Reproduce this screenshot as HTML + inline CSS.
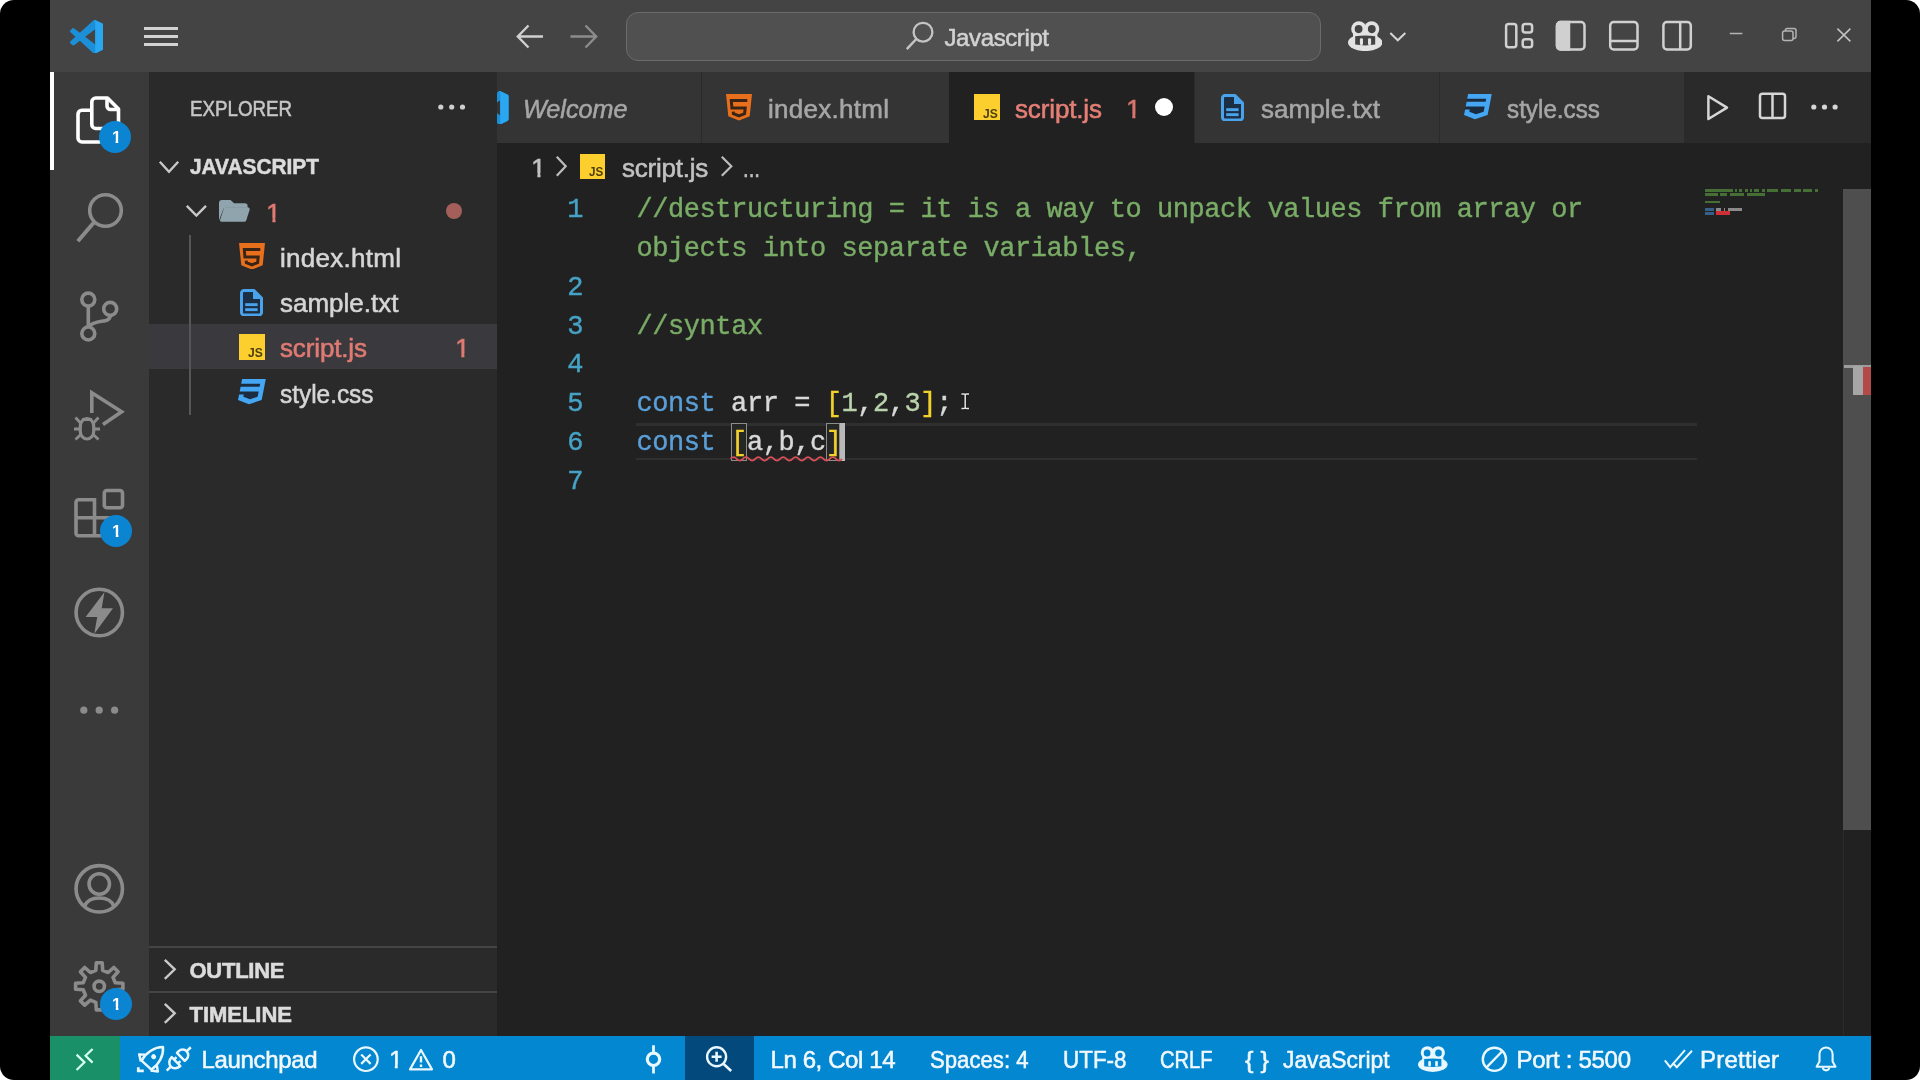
<!DOCTYPE html>
<html lang="en"><head><meta charset="utf-8"><title>script.js - Javascript - Visual Studio Code</title>
<style>
html,body{margin:0;padding:0;width:1920px;height:1080px;overflow:hidden;background:#fff;}
#frame{position:absolute;left:0;top:0;width:1920px;height:1080px;background:#000;border-radius:14px;overflow:hidden;filter:brightness(1);}
.b{position:absolute;display:block;}
.t{position:absolute;white-space:pre;line-height:1;display:block;}
.s{font-family:"Liberation Sans",sans-serif;-webkit-text-stroke:0.55px currentColor;}
.m{font-family:"Liberation Mono",monospace;-webkit-text-stroke:0.4px currentColor;}
</style></head><body><div id="frame">
<div class="b" style="left:50px;top:0px;width:1821px;height:72px;background:#444444;"></div>
<div class="b" style="left:50px;top:72px;width:99px;height:964px;background:#3a3a3a;"></div>
<div class="b" style="left:149px;top:72px;width:348px;height:964px;background:#2a2a2a;"></div>
<div class="b" style="left:497px;top:72px;width:1374px;height:71px;background:#2a2a2a;"></div>
<div class="b" style="left:497px;top:143px;width:1374px;height:893px;background:#212121;"></div>
<div class="b" style="left:50px;top:1036px;width:1821px;height:44px;background:#0287d0;"></div>
<div class="b" style="left:50px;top:1036px;width:70px;height:44px;background:#1a9068;"></div>
<div class="b" style="left:626px;top:11.5px;width:695px;height:49px;background:#505050;border:1.5px solid #6b6b6b;border-radius:12px;box-sizing:border-box;"></div>
<span class="t s" style="left:944.50px;top:25.67px;font-size:24px;color:#d2d2d2;letter-spacing:-0.392px;">Javascript</span>
<div class="b" style="left:50px;top:72px;width:3.8px;height:98px;background:#ffffff;"></div>
<span class="t s" style="left:190.00px;top:98.12px;font-size:22px;color:#c6c6c6;letter-spacing:0.000px;transform:scaleX(0.8513);transform-origin:0 0;">EXPLORER</span>
<span class="t s" style="left:189.50px;top:156.12px;font-size:22px;color:#dcdcdc;letter-spacing:0.000px;font-weight:700;transform:scaleX(0.9479);transform-origin:0 0;">JAVASCRIPT</span>
<span class="t s" style="left:266.30px;top:199.73px;font-size:26px;color:#e07a72;letter-spacing:0.000px;clip-path:polygon(0 0,100% 0,100% 70.5%,63.5% 70.5%,63.5% 100%,42.5% 100%,42.5% 70.5%,0 70.5%);">1</span>
<span class="t s" style="left:280.00px;top:245.48px;font-size:26px;color:#d6d6d6;letter-spacing:0.277px;">index.html</span>
<span class="t s" style="left:280.00px;top:290.48px;font-size:26px;color:#d6d6d6;letter-spacing:0.002px;">sample.txt</span>
<div class="b" style="left:149px;top:323.9px;width:348px;height:44.8px;background:#3a3a3e;"></div>
<span class="t s" style="left:280.00px;top:335.48px;font-size:26px;color:#e07a72;letter-spacing:-0.139px;">script.js</span>
<span class="t s" style="left:455.20px;top:335.48px;font-size:26px;color:#e07a72;letter-spacing:0.000px;clip-path:polygon(0 0,100% 0,100% 70.5%,63.5% 70.5%,63.5% 100%,42.5% 100%,42.5% 70.5%,0 70.5%);">1</span>
<span class="t s" style="left:280.00px;top:380.98px;font-size:26px;color:#d6d6d6;letter-spacing:0.000px;transform:scaleX(0.9380);transform-origin:0 0;">style.css</span>
<div class="b" style="left:189.3px;top:235px;width:2px;height:180px;background:#565656;"></div>
<div class="b" style="left:446px;top:202.5px;width:16px;height:16px;border-radius:50%;background:#a55f5a"></div>
<div class="b" style="left:149px;top:946px;width:348px;height:2px;background:#454545;"></div>
<div class="b" style="left:149px;top:991px;width:348px;height:2px;background:#454545;"></div>
<span class="t s" style="left:189.50px;top:959.87px;font-size:22px;color:#dcdcdc;letter-spacing:-0.260px;font-weight:700;">OUTLINE</span>
<span class="t s" style="left:189.50px;top:1004.37px;font-size:22px;color:#dcdcdc;letter-spacing:-0.025px;font-weight:700;">TIMELINE</span>
<div class="b" style="left:497px;top:72px;width:204px;height:71px;background:#343434;"></div>
<div class="b" style="left:702px;top:72px;width:247px;height:71px;background:#343434;"></div>
<div class="b" style="left:949px;top:72px;width:245px;height:71px;background:#212121;"></div>
<div class="b" style="left:1195px;top:72px;width:243.5px;height:71px;background:#343434;"></div>
<div class="b" style="left:1439.5px;top:72px;width:244.5px;height:71px;background:#343434;"></div>
<span class="t s" style="left:522.50px;top:96.48px;font-size:26px;color:#a6a6a6;letter-spacing:0.000px;font-style:italic;transform:scaleX(0.9687);transform-origin:0 0;">Welcome</span>
<span class="t s" style="left:768.00px;top:96.48px;font-size:26px;color:#a6a6a6;letter-spacing:0.277px;">index.html</span>
<span class="t s" style="left:1015.00px;top:96.48px;font-size:26px;color:#e57f76;letter-spacing:-0.139px;">script.js</span>
<span class="t s" style="left:1126.20px;top:96.48px;font-size:26px;color:#d9756d;letter-spacing:0.000px;clip-path:polygon(0 0,100% 0,100% 70.5%,63.5% 70.5%,63.5% 100%,42.5% 100%,42.5% 70.5%,0 70.5%);">1</span>
<div class="b" style="left:1155.25px;top:98px;width:18px;height:18px;border-radius:50%;background:#ffffff"></div>
<span class="t s" style="left:1261.00px;top:96.48px;font-size:26px;color:#a6a6a6;letter-spacing:0.058px;">sample.txt</span>
<span class="t s" style="left:1507.00px;top:96.48px;font-size:26px;color:#a6a6a6;letter-spacing:0.000px;transform:scaleX(0.9329);transform-origin:0 0;">style.css</span>
<span class="t s" style="left:531.30px;top:154.73px;font-size:26px;color:#c2c2c2;letter-spacing:0.000px;clip-path:polygon(0 0,100% 0,100% 70.5%,63.5% 70.5%,63.5% 100%,42.5% 100%,42.5% 70.5%,0 70.5%);">1</span>
<span class="t s" style="left:622.00px;top:154.73px;font-size:26px;color:#c2c2c2;letter-spacing:-0.233px;">script.js</span>
<span class="t s" style="left:743.00px;top:154.73px;font-size:26px;color:#c2c2c2;letter-spacing:0.000px;transform:scaleX(0.7849);transform-origin:0 0;">...</span>
<div class="b" style="left:636px;top:423px;width:1061px;height:2.5px;background:#2f2f2f;"></div>
<div class="b" style="left:636px;top:457.6px;width:1061px;height:2.5px;background:#2f2f2f;"></div>
<span class="t m" style="left:567.30px;top:197.02px;font-size:27px;color:#46a3c6;letter-spacing:0.000px;">1</span>
<span class="t m" style="left:567.30px;top:274.72px;font-size:27px;color:#46a3c6;letter-spacing:0.000px;">2</span>
<span class="t m" style="left:567.30px;top:313.62px;font-size:27px;color:#46a3c6;letter-spacing:0.000px;">3</span>
<span class="t m" style="left:567.30px;top:352.42px;font-size:27px;color:#46a3c6;letter-spacing:0.000px;">4</span>
<span class="t m" style="left:567.30px;top:391.32px;font-size:27px;color:#46a3c6;letter-spacing:0.000px;">5</span>
<span class="t m" style="left:567.30px;top:430.12px;font-size:27px;color:#46a3c6;letter-spacing:0.000px;">6</span>
<span class="t m" style="left:567.30px;top:469.02px;font-size:27px;color:#46a3c6;letter-spacing:0.000px;">7</span>
<span class="t m" style="left:636.50px;top:197.02px;font-size:27px;color:#79ac66;letter-spacing:0.000px;letter-spacing:-0.430px;">//destructuring = it is a way to unpack values from array or</span>
<span class="t m" style="left:636.50px;top:235.92px;font-size:27px;color:#79ac66;letter-spacing:0.000px;letter-spacing:-0.430px;">objects into separate variables,</span>
<span class="t m" style="left:636.50px;top:313.62px;font-size:27px;color:#79ac66;letter-spacing:0.000px;letter-spacing:-0.430px;">//syntax</span>
<span class="t m" style="left:636.50px;top:391.32px;font-size:27px;color:#5a9fd8;letter-spacing:0.000px;letter-spacing:-0.430px;">const</span>
<span class="t m" style="left:731.12px;top:391.32px;font-size:27px;color:#d8d8d8;letter-spacing:0.000px;letter-spacing:-0.430px;">arr =</span>
<span class="t m" style="left:825.74px;top:391.32px;font-size:27px;color:#f3d12c;letter-spacing:0.000px;letter-spacing:-0.430px;">[</span>
<span class="t m" style="left:841.51px;top:391.32px;font-size:27px;color:#b9d3ac;letter-spacing:0.000px;letter-spacing:-0.430px;">1</span>
<span class="t m" style="left:857.28px;top:391.32px;font-size:27px;color:#d8d8d8;letter-spacing:0.000px;letter-spacing:-0.430px;">,</span>
<span class="t m" style="left:873.05px;top:391.32px;font-size:27px;color:#b9d3ac;letter-spacing:0.000px;letter-spacing:-0.430px;">2</span>
<span class="t m" style="left:888.82px;top:391.32px;font-size:27px;color:#d8d8d8;letter-spacing:0.000px;letter-spacing:-0.430px;">,</span>
<span class="t m" style="left:904.59px;top:391.32px;font-size:27px;color:#b9d3ac;letter-spacing:0.000px;letter-spacing:-0.430px;">3</span>
<span class="t m" style="left:920.36px;top:391.32px;font-size:27px;color:#f3d12c;letter-spacing:0.000px;letter-spacing:-0.430px;">]</span>
<span class="t m" style="left:936.13px;top:391.32px;font-size:27px;color:#d8d8d8;letter-spacing:0.000px;letter-spacing:-0.430px;">;</span>
<div class="b" style="left:730.5px;top:423px;width:16px;height:37.5px;background:#252725;border:1.5px solid #8c8c8c;box-sizing:border-box;"></div>
<div class="b" style="left:825.5px;top:423px;width:14.5px;height:37.5px;background:#252725;border:1.5px solid #8c8c8c;box-sizing:border-box;"></div>
<span class="t m" style="left:636.50px;top:430.12px;font-size:27px;color:#5a9fd8;letter-spacing:0.000px;letter-spacing:-0.430px;">const</span>
<span class="t m" style="left:731.12px;top:430.12px;font-size:27px;color:#f3d12c;letter-spacing:0.000px;letter-spacing:-0.430px;">[</span>
<span class="t m" style="left:746.89px;top:430.12px;font-size:27px;color:#d8d8d8;letter-spacing:0.000px;letter-spacing:-0.430px;">a,b,c</span>
<span class="t m" style="left:825.74px;top:430.12px;font-size:27px;color:#f3d12c;letter-spacing:0.000px;letter-spacing:-0.430px;">]</span>
<div class="b" style="left:840px;top:423px;width:4.6px;height:38px;background:#b9b9b9;"></div>
<svg class="b" style="left:728px;top:453px;" width="116" height="10" viewBox="728 453 116 10"><path d="M730.5 458.9 q 3.1 -3.4 6.2 0 q 3.1 3.4 6.2 0 q 3.1 -3.4 6.2 0 q 3.1 3.4 6.2 0 q 3.1 -3.4 6.2 0 q 3.1 3.4 6.2 0 q 3.1 -3.4 6.2 0 q 3.1 3.4 6.2 0 q 3.1 -3.4 6.2 0 q 3.1 3.4 6.2 0 q 3.1 -3.4 6.2 0 q 3.1 3.4 6.2 0 q 3.1 -3.4 6.2 0 q 3.1 3.4 6.2 0 q 3.1 -3.4 6.2 0 q 3.1 3.4 6.2 0 q 3.1 -3.4 6.2 0 q 3.1 3.4 6.2 0" fill="none" stroke="#da4f58" stroke-width="1.7"/></svg>
<svg class="b" style="left:958px;top:390px;" width="14" height="22" viewBox="958 390 14 22"><path d="M961.4 394 H964 Q965.2 394 965.2 395.4 Q965.2 394 966.4 394 H969 M965.2 395 V407.6 M961.4 408.6 H964 Q965.2 408.6 965.2 407.2 Q965.2 408.6 966.4 408.6 H969" fill="none" stroke="#1a1a1a" stroke-width="3.4"/><path d="M961.4 394 H964 Q965.2 394 965.2 395.4 Q965.2 394 966.4 394 H969 M965.2 395 V407.6 M961.4 408.6 H964 Q965.2 408.6 965.2 407.2 Q965.2 408.6 966.4 408.6 H969" fill="none" stroke="#e4e4e4" stroke-width="1.5"/></svg>
<div class="b" style="left:1705.0px;top:189.2px;width:27.85px;height:2.6px;background:#456f35;"></div>
<div class="b" style="left:1735.24px;top:189.2px;width:1.39px;height:2.6px;background:#456f35;"></div>
<div class="b" style="left:1739.02px;top:189.2px;width:3.28px;height:2.6px;background:#456f35;"></div>
<div class="b" style="left:1744.69px;top:189.2px;width:3.28px;height:2.6px;background:#456f35;"></div>
<div class="b" style="left:1750.36px;top:189.2px;width:1.39px;height:2.6px;background:#456f35;"></div>
<div class="b" style="left:1754.14px;top:189.2px;width:5.17px;height:2.6px;background:#456f35;"></div>
<div class="b" style="left:1761.7px;top:189.2px;width:3.28px;height:2.6px;background:#456f35;"></div>
<div class="b" style="left:1767.37px;top:189.2px;width:10.84px;height:2.6px;background:#456f35;"></div>
<div class="b" style="left:1780.6px;top:189.2px;width:10.84px;height:2.6px;background:#456f35;"></div>
<div class="b" style="left:1793.83px;top:189.2px;width:7.06px;height:2.6px;background:#456f35;"></div>
<div class="b" style="left:1803.28px;top:189.2px;width:8.95px;height:2.6px;background:#456f35;"></div>
<div class="b" style="left:1814.62px;top:189.2px;width:3.28px;height:2.6px;background:#456f35;"></div>
<div class="b" style="left:1705.0px;top:193.2px;width:12.73px;height:2.6px;background:#456f35;"></div>
<div class="b" style="left:1720.12px;top:193.2px;width:7.06px;height:2.6px;background:#456f35;"></div>
<div class="b" style="left:1729.57px;top:193.2px;width:14.62px;height:2.6px;background:#456f35;"></div>
<div class="b" style="left:1746.58px;top:193.2px;width:18.4px;height:2.6px;background:#456f35;"></div>
<div class="b" style="left:1705.0px;top:200.6px;width:14.62px;height:2.6px;background:#456f35;"></div>
<div class="b" style="left:1705.0px;top:208.2px;width:8.95px;height:2.6px;background:#36608a;"></div>
<div class="b" style="left:1716.34px;top:208.2px;width:5.17px;height:2.6px;background:#8a8a8a;"></div>
<div class="b" style="left:1723.9px;top:208.2px;width:1.39px;height:2.6px;background:#8a8a8a;"></div>
<div class="b" style="left:1727.68px;top:208.2px;width:14.62px;height:2.6px;background:#8a8a8a;"></div>
<div class="b" style="left:1705.0px;top:212px;width:8.95px;height:2.6px;background:#36608a;"></div>
<div class="b" style="left:1716px;top:211.3px;width:14px;height:3.4px;background:#cf3038;"></div>
<div class="b" style="left:1842.5px;top:188.5px;width:28.5px;height:641px;background:#4e4e4e;"></div>
<div class="b" style="left:1843px;top:829.5px;width:1px;height:206px;background:#2b2b2b;"></div>
<div class="b" style="left:1843.5px;top:364.5px;width:27.5px;height:3px;background:#9c9c9c;"></div>
<div class="b" style="left:1852.5px;top:366px;width:10px;height:28.5px;background:#a6a6a6;"></div>
<div class="b" style="left:1862.5px;top:367px;width:8.5px;height:27.5px;background:#b24a4a;"></div>
<div class="b" style="left:685px;top:1036px;width:68.5px;height:44px;background:#04497b;"></div>
<span class="t s" style="left:201.50px;top:1047.67px;font-size:24px;color:#f2f8fc;letter-spacing:-0.347px;">Launchpad</span>
<span class="t s" style="left:389.20px;top:1047.67px;font-size:24px;color:#f2f8fc;letter-spacing:0.000px;clip-path:polygon(0 0,100% 0,100% 70.5%,63.5% 70.5%,63.5% 100%,42.5% 100%,42.5% 70.5%,0 70.5%);">1</span>
<span class="t s" style="left:442.50px;top:1047.67px;font-size:24px;color:#f2f8fc;letter-spacing:0.000px;">0</span>
<span class="t s" style="left:770.50px;top:1047.67px;font-size:24px;color:#f2f8fc;letter-spacing:-0.403px;">Ln 6, Col 14</span>
<span class="t s" style="left:930.00px;top:1047.67px;font-size:24px;color:#f2f8fc;letter-spacing:0.000px;transform:scaleX(0.9229);transform-origin:0 0;">Spaces: 4</span>
<span class="t s" style="left:1063.00px;top:1047.67px;font-size:24px;color:#f2f8fc;letter-spacing:0.000px;transform:scaleX(0.9339);transform-origin:0 0;">UTF-8</span>
<span class="t s" style="left:1160.00px;top:1047.67px;font-size:24px;color:#f2f8fc;letter-spacing:0.000px;transform:scaleX(0.8378);transform-origin:0 0;">CRLF</span>
<span class="t s" style="left:1244.50px;top:1047.67px;font-size:24px;color:#f2f8fc;letter-spacing:0.000px;transform:scaleX(1.0571);transform-origin:0 0;">{ }</span>
<span class="t s" style="left:1283.00px;top:1047.67px;font-size:24px;color:#f2f8fc;letter-spacing:0.000px;transform:scaleX(0.9506);transform-origin:0 0;">JavaScript</span>
<span class="t s" style="left:1516.50px;top:1047.67px;font-size:24px;color:#f2f8fc;letter-spacing:-0.291px;">Port : 5500</span>
<span class="t s" style="left:1700.00px;top:1047.67px;font-size:24px;color:#f2f8fc;letter-spacing:0.235px;">Prettier</span>
<svg class="b" style="left:69.7px;top:19.7px;" width="33.6" height="33.6" viewBox="0 0 100 100"><path fill-rule="evenodd" d="M70.9119 99.3171C72.4869 99.9307 74.2828 99.8914 75.8725 99.1264L96.4608 89.2197C98.6242 88.1787 100 85.9892 100 83.5872V16.4133C100 14.0113 98.6243 11.8218 96.4609 10.7808L75.8725 0.873756C73.7862 -0.130129 71.3446 0.11576 69.5135 1.44695C69.252 1.63711 69.0028 1.84943 68.769 2.08341L29.3551 38.0415L12.1872 25.0096C10.589 23.7965 8.35363 23.8959 6.86933 25.2461L1.36303 30.2549C-0.452552 31.9064 -0.454633 34.7627 1.35853 36.417L16.2471 50.0001L1.35853 63.5832C-0.454633 65.2374 -0.452552 68.0938 1.36303 69.7453L6.86933 74.7541C8.35363 76.1043 10.589 76.2037 12.1872 74.9905L29.3551 61.9587L68.769 97.9167C69.3925 98.5406 70.1246 99.0104 70.9119 99.3171ZM75.0152 27.2989L45.1091 50.0001L75.0152 72.7012V27.2989Z" fill="#1c8fd9"/><path d="M75.8578 99.1263C73.4721 100.274 70.6219 99.7885 68.75 97.9166C71.0564 100.223 75 98.5895 75 95.3278V4.67213C75 1.41039 71.0564 -0.223106 68.75 2.08329C70.6219 0.211402 73.4721 -0.273666 75.8578 0.873633L96.4587 10.7807C98.6234 11.8217 100 14.0112 100 16.4132V83.5871C100 85.9891 98.6234 88.1786 96.4586 89.2196L75.8578 99.1263Z" fill="#2aa7f0"/></svg>
<div class="b" style="left:144px;top:27.05px;width:34px;height:2.6px;background:#d2d2d2;"></div>
<div class="b" style="left:144px;top:35.15px;width:34px;height:2.6px;background:#d2d2d2;"></div>
<div class="b" style="left:144px;top:43.35px;width:34px;height:2.6px;background:#d2d2d2;"></div>
<svg class="b" style="left:0;top:0" width="1920" height="80" viewBox="0 0 1920 80"><path d="M543 36.5H518M528.5 25.5L517.8 36.5L528.5 47.5" fill="none" stroke="#d0d0d0" stroke-width="2.4" stroke-linejoin="miter"/></svg>
<svg class="b" style="left:0;top:0" width="1920" height="80" viewBox="0 0 1920 80"><path d="M570.5 36.5H596M585.5 25.5L596.2 36.5L585.5 47.5" fill="none" stroke="#8c8c8c" stroke-width="2.4" stroke-linejoin="miter"/></svg>
<svg class="b" style="left:900px;top:16px" width="40" height="40" viewBox="900 16 40 40"><circle cx="923" cy="32.2" r="9.4" fill="none" stroke="#c4c4c4" stroke-width="2.3"/><path d="M916.3 39 L906.8 49.2" stroke="#c4c4c4" stroke-width="2.5" fill="none"/></svg>
<svg class="b" style="left:1347.8px;top:20.5px;" width="34.4" height="30.2" viewBox="0 0 34.4 30.2"><ellipse cx="17.2" cy="21.5" rx="17.2" ry="8.6" fill="#e2e2e2"/><circle cx="10.9" cy="7.9" r="7.7" fill="#e2e2e2"/><circle cx="23.6" cy="7.9" r="7.7" fill="#e2e2e2"/><rect x="5" y="9" width="24.4" height="12" fill="#e2e2e2"/><ellipse cx="10.6" cy="8.1" rx="3.9" ry="4.1" fill="#444444"/><ellipse cx="23.8" cy="8.1" rx="3.9" ry="4.1" fill="#444444"/><path d="M7.2 15.2 Q17.2 13.6 27.2 15.2 V23.6 Q17.2 25.2 7.2 23.6Z" fill="#444444"/><rect x="11.9" y="17.3" width="3.1" height="6.6" rx="1.2" fill="#e2e2e2"/><rect x="20" y="17.3" width="3.1" height="6.6" rx="1.2" fill="#e2e2e2"/></svg>
<svg class="b" style="left:1386px;top:28px" width="24" height="18" viewBox="1386 28 24 18"><path d="M1390.3 33 L1397.8 40.2 L1405.3 33" fill="none" stroke="#d4d4d4" stroke-width="2.1"/></svg>
<svg class="b" style="left:1500px;top:16px" width="200" height="40" viewBox="1500 16 200 40" fill="none" stroke="#d0d0d0" stroke-width="2.5"><rect x="1506.1" y="24" width="10.2" height="23.3" rx="2.5"/><rect x="1522.7" y="24" width="9.4" height="8.4" rx="2.5"/><rect x="1522.7" y="39.2" width="9.4" height="8.1" rx="2.5"/><rect x="1557" y="22" width="27.5" height="27.4" rx="3.5"/><path d="M1557 25.5 a3.5 3.5 0 0 1 3.5 -3.5 H1569 V49.4 H1560.5 a3.5 3.5 0 0 1 -3.5 -3.5Z" fill="#d0d0d0"/><rect x="1610.2" y="22" width="27.3" height="27.4" rx="3.5"/><path d="M1610.2 41.1 H1637.5"/><rect x="1663.4" y="22" width="27.4" height="27.4" rx="3.5"/><path d="M1680.2 22 V49.4"/></svg>
<svg class="b" style="left:1720px;top:20px" width="140" height="30" viewBox="1720 20 140 30" fill="none" stroke="#b4b4b4" stroke-width="1.5"><path d="M1729.8 33.6 H1742.4"/><rect x="1782.6" y="31" width="10.4" height="9.4" rx="2"/><path d="M1785.4 31 V30.3 a1.8 1.8 0 0 1 1.8 -1.8 H1794 a2 2 0 0 1 2 2 V36.6 a1.8 1.8 0 0 1 -1.8 1.8 H1793"/><path d="M1837.4 28.6 L1850.4 41.4 M1850.4 28.6 L1837.4 41.4" stroke="#c4c4c4"/></svg>
<svg class="b" style="left:50px;top:72px" width="100" height="100" viewBox="50 72 100 100" fill="none" stroke="#8b8b8b" stroke-width="3.6"><g stroke="#ffffff" stroke-linejoin="round"><path d="M91.8 110 V102 a4 4 0 0 1 4 -4 H107.5 L118.5 109 V124.5 a4 4 0 0 1 -4 4 H95.8 a4 4 0 0 1 -4 -4 Z" /><path d="M107 98.5 V106 a3.5 3.5 0 0 0 3.5 3.5 H118"/><path d="M91.8 110.2 H82 a4 4 0 0 0 -4 4 V138 a4 4 0 0 0 4 4 H99 a4 4 0 0 0 4 -4 V128.5"/></g></svg>
<div class="b" style="left:99.3px;top:120.80000000000001px;width:32px;height:32px;border-radius:50%;background:#0b84d2"></div>
<span class="t s" style="left:111.90px;top:129.22px;font-size:16.5px;color:#ffffff;letter-spacing:0.000px;font-weight:700;clip-path:polygon(0 0,100% 0,100% 68.5%,69% 68.5%,69% 100%,40% 100%,40% 68.5%,0 68.5%);-webkit-text-stroke:0;">1</span>
<svg class="b" style="left:50px;top:170px" width="100" height="100" viewBox="50 170 100 100" fill="none" stroke="#8b8b8b" stroke-width="3.6"><circle cx="105.5" cy="210.5" r="15.8"/><path d="M94.3 222 L77.8 241.2" stroke-width="4"/></svg>
<svg class="b" style="left:50px;top:269px" width="100" height="98" viewBox="50 269 100 98" fill="none" stroke="#8b8b8b" stroke-width="3.6"><circle cx="88.3" cy="299.6" r="6.5"/><circle cx="110.2" cy="308.9" r="6.5"/><circle cx="88.3" cy="333.5" r="6.5"/><path d="M88.3 306.2 V327"/><path d="M110.2 315.5 C110.2 324 96 318.5 89 326.5"/></svg>
<svg class="b" style="left:50px;top:367px" width="100" height="98" viewBox="50 367 100 98" fill="none" stroke="#8b8b8b" stroke-width="3.6"><path d="M91.8 413 V392.8 L121.6 411.8 L103 424.4" stroke-linejoin="miter"/><path d="M80.3 426 a6.7 7.5 0 0 1 13.4 0 V431.5 a6.7 7.5 0 0 1 -13.4 0 Z" stroke-width="3.2"/><path d="M80 429 H74 M94 429 H100 M80.5 423 L75.5 417.5 M93.5 423 L98.5 417.5 M80.8 434.5 L75.5 439.5 M93.2 434.5 L98.5 439.5 M82 419.5 H92" stroke-width="2.8"/></svg>
<svg class="b" style="left:50px;top:465px" width="100" height="99" viewBox="50 465 100 99" fill="none" stroke="#8b8b8b" stroke-width="3.6"><rect x="104.3" y="490.5" width="18.2" height="17.2" rx="2.5"/><path d="M78.5 499.8 H94.5 V535.7 H78.5 a2.5 2.5 0 0 1 -2.5 -2.5 V502.3 a2.5 2.5 0 0 1 2.5 -2.5 Z M76 517.8 H94.5 M94.5 517.8 H113 a2.5 2.5 0 0 1 2.5 2.5 V533.2 a2.5 2.5 0 0 1 -2.5 2.5 H94.5"/></svg>
<div class="b" style="left:99.5px;top:514.8px;width:32px;height:32px;border-radius:50%;background:#0b84d2"></div>
<span class="t s" style="left:112.10px;top:523.22px;font-size:16.5px;color:#ffffff;letter-spacing:0.000px;font-weight:700;clip-path:polygon(0 0,100% 0,100% 68.5%,69% 68.5%,69% 100%,40% 100%,40% 68.5%,0 68.5%);-webkit-text-stroke:0;">1</span>
<svg class="b" style="left:50px;top:564px" width="100" height="98" viewBox="50 564 100 98" fill="none" stroke="#8b8b8b" stroke-width="3.6"><circle cx="99.25" cy="612.5" r="23.2"/><path d="M104.5 592.1 L85.6 616.9 L97.2 616.9 L94.2 634.1 L113.0 608.2 L101.7 608.2 Z" fill="#8b8b8b" stroke="none"/></svg>
<svg class="b" style="left:50px;top:680px" width="100" height="60" viewBox="50 680 100 60" fill="none" stroke="#8b8b8b" stroke-width="3.6"><g fill="#8b8b8b" stroke="none"><circle cx="83.8" cy="710.2" r="3.6"/><circle cx="99.2" cy="710.2" r="3.6"/><circle cx="114.6" cy="710.2" r="3.6"/></g></svg>
<svg class="b" style="left:50px;top:838px" width="100" height="100" viewBox="50 838 100 100" fill="none" stroke="#8b8b8b" stroke-width="3.6"><circle cx="99.25" cy="888.8" r="23.2"/><circle cx="99.25" cy="884" r="10.2"/><path d="M84.4 906.6 C86.6 900.6 92 898 99.25 898 C106.5 898 111.9 900.6 114.1 906.6"/></svg>
<svg class="b" style="left:50px;top:938px" width="100" height="98" viewBox="50 938 100 98" fill="none" stroke="#8b8b8b" stroke-width="3.6"><path d="M95.8 970.3 L96.3 962.7 L102.2 962.7 L102.7 970.3 L108.1 972.5 L113.8 967.5 L118.1 971.7 L113.0 977.4 L115.3 982.8 L122.9 983.3 L122.9 989.3 L115.3 989.8 L113.0 995.2 L118.1 1000.9 L113.8 1005.1 L108.1 1000.1 L102.7 1002.3 L102.2 1009.9 L96.3 1009.9 L95.8 1002.3 L90.4 1000.1 L84.7 1005.1 L80.4 1000.9 L85.5 995.2 L83.2 989.8 L75.6 989.3 L75.6 983.3 L83.2 982.8 L85.5 977.4 L80.4 971.7 L84.7 967.5 L90.4 972.5Z" stroke-linejoin="round"/><circle cx="99.25" cy="986.3" r="5.2"/></svg>
<div class="b" style="left:99.5px;top:987.8px;width:32px;height:32px;border-radius:50%;background:#0b84d2"></div>
<span class="t s" style="left:112.10px;top:996.22px;font-size:16.5px;color:#ffffff;letter-spacing:0.000px;font-weight:700;clip-path:polygon(0 0,100% 0,100% 68.5%,69% 68.5%,69% 100%,40% 100%,40% 68.5%,0 68.5%);-webkit-text-stroke:0;">1</span>
<svg class="b" style="left:156.3px;top:157.8px;" width="26.0" height="17.599999999999994" viewBox="156.3 157.8 26.0 17.599999999999994"><path d="M160.10000000000002 161.60000000000002 L169.3 171.6 L178.5 161.60000000000002" fill="none" stroke="#c8c8c8" stroke-width="2.4"/></svg>
<svg class="b" style="left:182.5px;top:202.3px;" width="26.80000000000001" height="17.299999999999983" viewBox="182.5 202.3 26.80000000000001 17.299999999999983"><path d="M186.3 206.10000000000002 L195.9 215.79999999999998 L205.5 206.10000000000002" fill="none" stroke="#c8c8c8" stroke-width="2.4"/></svg>
<svg class="b" style="left:219.4px;top:200.1px;" width="30.7" height="21.7" viewBox="0 0 30.7 21.7"><path d="M0 3 a3 3 0 0 1 3 -3 h8.5 l3.6 3.2 h10.9 a2.6 2.6 0 0 1 2.6 2.6 v2 h-22 a2.6 2.6 0 0 0 -2.4 1.8 l-4.2 11 z" fill="#90a4ae"/><path d="M6.3 7.3 h22.4 a2 2 0 0 1 1.9 2.6 l-3.3 10.3 a2.2 2.2 0 0 1 -2.1 1.5 h-22.5 a1.6 1.6 0 0 1 -1.5 -2.1 l3.5 -10.9 a2 2 0 0 1 1.6 -1.4 z" fill="#90a4ae"/></svg>
<svg class="b" style="left:238.8px;top:242.5px;" width="26" height="26.6" viewBox="0 0 26 26.6"><path d="M0 0 H26 L23.7 22.2 L13 26.6 L2.3 22.2 Z" fill="#e8701d"/><path d="M21.3 6.6 H5.3 L5.9 14 H19.2 L18.6 19.6 L13 21.8 L7.4 19.6 L7.2 17.6" fill="none" stroke="#3a2416" stroke-width="3"/></svg>
<svg class="b" style="left:240.1px;top:288.5px;" width="23" height="27.5" viewBox="0 0 23 27.5"><path d="M4 1.5 H14 L21.5 9 V23.5 a2.5 2.5 0 0 1 -2.5 2.5 H4 a2.5 2.5 0 0 1 -2.5 -2.5 V4 a2.5 2.5 0 0 1 2.5 -2.5 Z" fill="#1c2e44" stroke="#4aa3ea" stroke-width="3" stroke-linejoin="round"/><path d="M13 1.5 V10 H21.5 Z" fill="#4aa3ea"/><rect x="5.2" y="14.2" width="12.4" height="2.9" fill="#4aa3ea"/><rect x="5.2" y="19.2" width="12.4" height="2.9" fill="#4aa3ea"/></svg>
<div class="b" style="left:238.7px;top:333.7px;width:26px;height:26px;background:#fccf2e;"></div>
<span class="t s" style="left:247.54px;top:346.46px;font-size:13.0px;color:#4e400e;letter-spacing:0.000px;font-weight:700;transform:scaleX(0.9321);transform-origin:0 0;-webkit-text-stroke:0;">JS</span>
<svg class="b" style="left:237.8px;top:379.3px;overflow:visible;" width="27.8" height="25.4" viewBox="2.06 3 19.88 18"><path d="M5 3 H21.94 L18.96 18 L9.91 21 L2.06 18 Z" fill="#1b2c40"/><path d="M5,3L4.35,6.34H17.94L17.5,8.5H3.92L3.26,11.83H16.85L16.09,15.64L10.61,17.45L5.86,15.64L6.19,14H2.85L2.06,18L9.91,21L18.96,18L20.16,11.97L20.4,10.76L21.94,3H5Z" fill="#45a6f3"/></svg>
<svg class="b" style="left:161.3px;top:955.8px;" width="17.5" height="26.700000000000045" viewBox="161.3 955.8 17.5 26.700000000000045"><path d="M165.10000000000002 959.5999999999999 L175.0 969.15 L165.10000000000002 978.7" fill="none" stroke="#c8c8c8" stroke-width="2.4"/></svg>
<svg class="b" style="left:161.3px;top:1000.3px;" width="17.5" height="26.700000000000045" viewBox="161.3 1000.3 17.5 26.700000000000045"><path d="M165.10000000000002 1004.0999999999999 L175.0 1013.65 L165.10000000000002 1023.2" fill="none" stroke="#c8c8c8" stroke-width="2.4"/></svg>
<svg class="b" style="left:430px;top:100px" width="40" height="14" viewBox="430 100 40 14" fill="#cfcfcf"><circle cx="440.8" cy="107" r="2.6"/><circle cx="451.7" cy="107" r="2.6"/><circle cx="462.5" cy="107" r="2.6"/></svg>
<div class="b" style="left:497px;top:72px;width:60px;height:71px;overflow:hidden"><svg class="b" style="left:-21.8px;top:18.9px" width="33.6" height="33.6" viewBox="0 0 100 100"><path fill-rule="evenodd" d="M70.9119 99.3171C72.4869 99.9307 74.2828 99.8914 75.8725 99.1264L96.4608 89.2197C98.6242 88.1787 100 85.9892 100 83.5872V16.4133C100 14.0113 98.6243 11.8218 96.4609 10.7808L75.8725 0.873756C73.7862 -0.130129 71.3446 0.11576 69.5135 1.44695C69.252 1.63711 69.0028 1.84943 68.769 2.08341L29.3551 38.0415L12.1872 25.0096C10.589 23.7965 8.35363 23.8959 6.86933 25.2461L1.36303 30.2549C-0.452552 31.9064 -0.454633 34.7627 1.35853 36.417L16.2471 50.0001L1.35853 63.5832C-0.454633 65.2374 -0.452552 68.0938 1.36303 69.7453L6.86933 74.7541C8.35363 76.1043 10.589 76.2037 12.1872 74.9905L29.3551 61.9587L68.769 97.9167C69.3925 98.5406 70.1246 99.0104 70.9119 99.3171ZM75.0152 27.2989L45.1091 50.0001L75.0152 72.7012V27.2989Z" fill="#1c8fd9"/><path d="M75.8578 99.1263C73.4721 100.274 70.6219 99.7885 68.75 97.9166C71.0564 100.223 75 98.5895 75 95.3278V4.67213C75 1.41039 71.0564 -0.223106 68.75 2.08329C70.6219 0.211402 73.4721 -0.273666 75.8578 0.873633L96.4587 10.7807C98.6234 11.8217 100 14.0112 100 16.4132V83.5871C100 85.9891 98.6234 88.1786 96.4586 89.2196L75.8578 99.1263Z" fill="#2aa7f0"/></svg></div>
<svg class="b" style="left:726.3px;top:94px;" width="26" height="26.6" viewBox="0 0 26 26.6"><path d="M0 0 H26 L23.7 22.2 L13 26.6 L2.3 22.2 Z" fill="#e8701d"/><path d="M21.3 6.6 H5.3 L5.9 14 H19.2 L18.6 19.6 L13 21.8 L7.4 19.6 L7.2 17.6" fill="none" stroke="#3a2416" stroke-width="3"/></svg>
<div class="b" style="left:973.9px;top:94.4px;width:26px;height:26px;background:#fccf2e;"></div>
<span class="t s" style="left:982.74px;top:107.16px;font-size:13.0px;color:#4e400e;letter-spacing:0.000px;font-weight:700;transform:scaleX(0.9321);transform-origin:0 0;-webkit-text-stroke:0;">JS</span>
<svg class="b" style="left:1220.6px;top:93.6px;" width="23" height="27.5" viewBox="0 0 23 27.5"><path d="M4 1.5 H14 L21.5 9 V23.5 a2.5 2.5 0 0 1 -2.5 2.5 H4 a2.5 2.5 0 0 1 -2.5 -2.5 V4 a2.5 2.5 0 0 1 2.5 -2.5 Z" fill="#1c2e44" stroke="#4aa3ea" stroke-width="3" stroke-linejoin="round"/><path d="M13 1.5 V10 H21.5 Z" fill="#4aa3ea"/><rect x="5.2" y="14.2" width="12.4" height="2.9" fill="#4aa3ea"/><rect x="5.2" y="19.2" width="12.4" height="2.9" fill="#4aa3ea"/></svg>
<svg class="b" style="left:1463.8px;top:94.4px;overflow:visible;" width="27.8" height="25.4" viewBox="2.06 3 19.88 18"><path d="M5 3 H21.94 L18.96 18 L9.91 21 L2.06 18 Z" fill="#1b2c40"/><path d="M5,3L4.35,6.34H17.94L17.5,8.5H3.92L3.26,11.83H16.85L16.09,15.64L10.61,17.45L5.86,15.64L6.19,14H2.85L2.06,18L9.91,21L18.96,18L20.16,11.97L20.4,10.76L21.94,3H5Z" fill="#45a6f3"/></svg>
<svg class="b" style="left:1700px;top:85px" width="150" height="44" viewBox="1700 85 150 44" fill="none" stroke="#d6d6d6" stroke-width="2.5"><path d="M1708.4 96.2 L1727 107.6 L1708.4 119 Z" stroke-linejoin="round"/><rect x="1760" y="93.7" width="25" height="24.4" rx="2.5"/><path d="M1772.5 93.7 V118"/><g fill="#d6d6d6" stroke="none"><circle cx="1813.8" cy="107" r="2.6"/><circle cx="1824.5" cy="107" r="2.6"/><circle cx="1835.1" cy="107" r="2.6"/></g></svg>
<svg class="b" style="left:552.7px;top:153px;" width="16.5" height="26.5" viewBox="552.7 153 16.5 26.5"><path d="M556.5 156.8 L565.4000000000001 166.25 L556.5 175.7" fill="none" stroke="#bdbdbd" stroke-width="2.2"/></svg>
<div class="b" style="left:580.2px;top:153.9px;width:25px;height:25px;background:#fccf2e;"></div>
<span class="t s" style="left:588.70px;top:166.19px;font-size:12.5px;color:#4e400e;letter-spacing:0.000px;font-weight:700;transform:scaleX(0.9321);transform-origin:0 0;-webkit-text-stroke:0;">JS</span>
<svg class="b" style="left:717.7px;top:153px;" width="17.09999999999991" height="26.5" viewBox="717.7 153 17.09999999999991 26.5"><path d="M721.5 156.8 L731.0 166.25 L721.5 175.7" fill="none" stroke="#bdbdbd" stroke-width="2.2"/></svg>
<svg class="b" style="left:50px;top:1036px" width="1821" height="44" viewBox="50 1036 1821 44" fill="none" stroke="#d4fff0" stroke-width="2.3"><path d="M76.6 1054.6 L84.4 1062.3 L76.6 1070"/><path d="M92.6 1049 L85.6 1055.8 L92.6 1062.6"/></svg>
<svg class="b" style="left:50px;top:1036px" width="1821" height="44" viewBox="50 1036 1821 44" fill="none" stroke="#e9f7ff" stroke-width="2.5"><g transform="translate(146.5 1065.1) rotate(-47.5)" stroke-linejoin="round"><path d="M0 -6.7 C9 -8.8 18.8 -6.2 24.4 0 C18.8 6.2 9 8.8 0 6.7 Z"/><path d="M6.8 -7.8 L3 -12.6 L-1.2 -6.6 M6.8 7.8 L3 12.6 L-1.2 6.6"/><circle cx="11" cy="-0.4" r="2.5" fill="#e9f7ff" stroke="none"/></g><path d="M138.3 1067.2 V1070.9 H143.8" stroke-width="2.8"/></svg>
<svg class="b" style="left:50px;top:1036px" width="1821" height="44" viewBox="50 1036 1821 44" fill="none" stroke="#e9f7ff" stroke-width="2.5"><g transform="translate(178.75 1058.9) rotate(-44)" stroke-linejoin="round"><path d="M-16.8 0 H-11 M11 0 H16.8"/><path d="M-3.8 -6.2 V6.2 A7.2 6.2 0 0 1 -3.8 -6.2 Z"/><path d="M-3.8 -2.8 H-0.4 M-3.8 2.8 H-0.4"/><path d="M2.9 -5.6 V5.6 H5.4 A5.6 5.6 0 0 0 5.4 -5.6 Z"/></g></svg>
<svg class="b" style="left:50px;top:1036px" width="1821" height="44" viewBox="50 1036 1821 44" fill="none" stroke="#e9f7ff" stroke-width="2.2"><circle cx="365.9" cy="1059.2" r="11.8"/><path d="M361.2 1054.5 L370.6 1063.9 M370.6 1054.5 L361.2 1063.9"/><path d="M421 1050 L432 1069.4 H410 Z" stroke-linejoin="round"/><path d="M421 1056.2 V1062.6 M421 1064.6 V1067" stroke-width="2.4"/></svg>
<svg class="b" style="left:50px;top:1036px" width="1821" height="44" viewBox="50 1036 1821 44" fill="none" stroke="#e9f7ff" stroke-width="2.2"><circle cx="653.5" cy="1059.3" r="6.2" stroke-width="3.2"/><path d="M653.5 1045.2 V1053 M653.5 1065.6 V1073.6" stroke-width="2.8"/></svg>
<svg class="b" style="left:50px;top:1036px" width="1821" height="44" viewBox="50 1036 1821 44" fill="none" stroke="#e9f7ff" stroke-width="2.2"><circle cx="716.6" cy="1056.8" r="9.5" stroke-width="2.4"/><path d="M723.6 1064 L731.2 1071" stroke-width="2.6"/><path d="M711.6 1056.8 H721.6 M716.6 1051.8 V1061.8" stroke-width="2.6"/></svg>
<svg class="b" style="left:1418.21px;top:1046.4px;" width="29.58" height="25.97" viewBox="0 0 34.4 30.2"><ellipse cx="17.2" cy="21.5" rx="17.2" ry="8.6" fill="#e9f7ff"/><circle cx="10.9" cy="7.9" r="7.7" fill="#e9f7ff"/><circle cx="23.6" cy="7.9" r="7.7" fill="#e9f7ff"/><rect x="5" y="9" width="24.4" height="12" fill="#e9f7ff"/><ellipse cx="10.6" cy="8.1" rx="3.9" ry="4.1" fill="#0287d0"/><ellipse cx="23.8" cy="8.1" rx="3.9" ry="4.1" fill="#0287d0"/><path d="M7.2 15.2 Q17.2 13.6 27.2 15.2 V23.6 Q17.2 25.2 7.2 23.6Z" fill="#0287d0"/><rect x="11.9" y="17.3" width="3.1" height="6.6" rx="1.2" fill="#e9f7ff"/><rect x="20" y="17.3" width="3.1" height="6.6" rx="1.2" fill="#e9f7ff"/></svg>
<svg class="b" style="left:50px;top:1036px" width="1821" height="44" viewBox="50 1036 1821 44" fill="none" stroke="#e9f7ff" stroke-width="2.2"><circle cx="1494.4" cy="1059.3" r="11.6" stroke-width="2.4"/><path d="M1486.3 1067.6 L1502.5 1051" stroke-width="2.4"/></svg>
<svg class="b" style="left:50px;top:1036px" width="1821" height="44" viewBox="50 1036 1821 44" fill="none" stroke="#e9f7ff" stroke-width="2.2"><path d="M1664.8 1060.3 L1670.2 1067.2 L1685 1050.2 M1672.6 1062.8 L1676.8 1067.2 L1692 1050.8" stroke-width="2"/></svg>
<svg class="b" style="left:50px;top:1036px" width="1821" height="44" viewBox="50 1036 1821 44" fill="none" stroke="#e9f7ff" stroke-width="2.1"><path d="M1816.6 1066.8 L1819.5 1061.5 V1054 a6.55 6.55 0 0 1 13.1 0 V1061.5 L1835.5 1066.8 Z" stroke-linejoin="round"/><path d="M1822.8 1067.6 a3.3 3.3 0 0 0 6.5 0"/></svg>
</div></body></html>
